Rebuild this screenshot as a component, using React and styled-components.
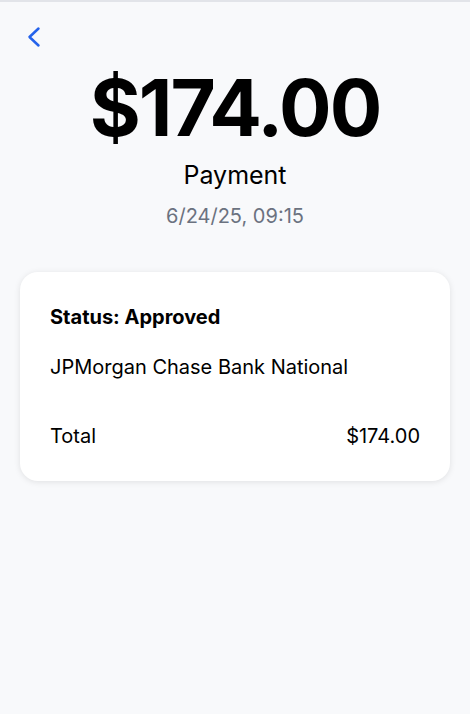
import { createGlobalStyle } from "styled-components";
import styled from "styled-components";

const GlobalStyle = createGlobalStyle`
  html, body {
    margin: 0;
    padding: 0;
    background: #f8f9fb;
    font-family: Inter, "Noto Sans", sans-serif;
    color: #000;
  }
`;

const Page = styled.div`
  box-sizing: border-box;
  min-height: 714px;
  border-top: 2px solid #e2e4e9;
  padding: 20px 20px 0;
`;

const BackButton = styled.button`
  display: flex;
  width: 16px;
  height: 24px;
  margin: 3px 0 0 6px;
  padding: 0;
  border: 0;
  background: transparent;
  color: #2563eb;
  cursor: pointer;
`;

const Hero = styled.div`
  display: flex;
  flex-direction: column;
  align-items: center;
  margin-top: 20px;
`;

const Amount = styled.div`
  font-size: 78px;
  font-weight: 700;
  line-height: 78px;
  letter-spacing: -2px;
`;

const Label = styled.div`
  margin-top: 12px;
  font-size: 25px;
  line-height: 32px;
`;

const Date = styled.div`
  margin-top: 11px;
  font-size: 20px;
  line-height: 28px;
  color: #6b7280;
`;

const Card = styled.div`
  margin-top: 42px;
  background: #fff;
  border-radius: 18px;
  box-shadow: 0 1px 6px rgba(0, 0, 0, 0.1);
  padding: 31px 30px;
  display: flex;
  flex-direction: column;
`;

const Line = styled.div`
  font-size: 20px;
  line-height: 28px;
  font-weight: ${(p) => (p.bold ? 700 : 400)};
  margin-top: ${(p) => p.gap || 0}px;
  display: flex;
  justify-content: space-between;
`;

const ChevronLeft = () => (
  <svg width="16" height="24" viewBox="0 0 16 24" fill="none" stroke="currentColor" strokeWidth="2.5" strokeLinecap="round" strokeLinejoin="round">
    <path d="M12.5 3.5L3.5 12l9 8.5" />
  </svg>
);

export default function App() {
  return (
    <>
      <GlobalStyle />
      <Page>
        <BackButton aria-label="Back">
          <ChevronLeft />
        </BackButton>
        <Hero>
          <Amount>$174.00</Amount>
          <Label>Payment</Label>
          <Date>6/24/25, 09:15</Date>
        </Hero>
        <Card>
          <Line bold>Status: Approved</Line>
          <Line gap={22}>JPMorgan Chase Bank National</Line>
          <Line gap={41}>
            <span>Total</span>
            <span>$174.00</span>
          </Line>
        </Card>
      </Page>
    </>
  );
}
